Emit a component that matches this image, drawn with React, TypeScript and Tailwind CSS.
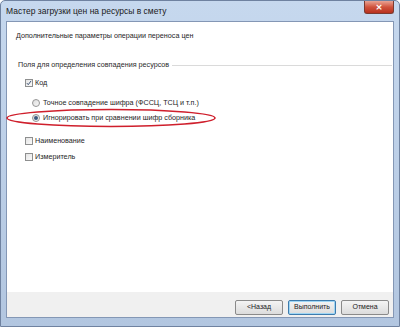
import React from "react";

const font = { fontFamily: '"Liberation Sans", Arial, sans-serif' };

function Checkbox({ checked }: { checked?: boolean }) {
  return (
    <div className="w-[8px] h-[8px] border border-[#8e8f8f] bg-gradient-to-br from-[#e4e4e4] to-[#fafafa] flex items-center justify-center shrink-0">
      {checked && (
        <svg width="8" height="8" viewBox="0 0 8 8" className="-mt-[1px]">
          <path d="M1.2 4.2 L3 6.2 L6.8 1.2" stroke="#3a4f70" strokeWidth="1.3" fill="none" />
        </svg>
      )}
    </div>
  );
}

function Radio({ checked }: { checked?: boolean }) {
  return (
    <div className="w-[8px] h-[8px] rounded-full border border-[#959595] bg-gradient-to-br from-[#dcdcdc] to-[#f8f8f8] flex items-center justify-center shrink-0">
      {checked && <div className="w-[4px] h-[4px] rounded-full bg-[#3b5a80]" />}
    </div>
  );
}

function Button({ label, primary }: { label: string; primary?: boolean }) {
  return (
    <div
      className={`w-[48px] h-[15px] rounded-[2px] flex items-center justify-center text-[7px] text-[#222] bg-gradient-to-b from-[#f4f4f4] to-[#dcdcdc] border ${
        primary ? "border-[#3d7bad] shadow-[inset_0_0_0_1px_#9fd6f4]" : "border-[#8a8a8a]"
      }`}
    >
      {label}
    </div>
  );
}

export default function App() {
  return (
    <div
      className="w-[400px] h-[327px] overflow-hidden flex flex-col bg-gradient-to-b from-[#c6d8ee] to-[#b2c6e0] border border-[#6f82a0] rounded-t-[5px]"
      style={font}
    >
      {/* Title bar */}
      <div className="h-[20px] shrink-0 flex items-start relative">
        <div className="pl-[5px] pt-[4px] text-[8.5px] leading-[12px] text-[#1a1a1a]">
          Мастер загрузки цен на ресурсы в смету
        </div>
        <div className="absolute right-[5px] top-[0px] w-[30px] h-[13px] rounded-b-[3px] border border-[#7b3a30] border-t-0 bg-gradient-to-b from-[#e8a394] via-[#d0533d] to-[#b8301d] flex items-center justify-center">
          <span className="text-white text-[9px] leading-none font-bold" style={{ fontFamily: '"DejaVu Sans", sans-serif' }}>
            ×
          </span>
        </div>
      </div>

      {/* Client area */}
      <div className="flex-1 mx-[5px] flex flex-col border border-[#8497b5] bg-white relative">
        <div className="flex-1 flex flex-col text-[7.2px] leading-[10px] text-[#1e1e1e]">
          <div className="mt-[9px] pl-[9px]">Дополнительные параметры операции переноса цен</div>

          <div className="mt-[19px] pl-[11px] pr-[1px] flex items-center gap-[3px]">
            <span className="text-[#2a2a2a]">Поля для определения совпадения ресурсов</span>
            <div className="flex-1 h-px bg-[#dadada]" />
          </div>

          <div className="mt-[8px] pl-[18px] flex items-center gap-[2px]">
            <Checkbox checked />
            <span>Код</span>
          </div>

          <div className="mt-[10px] pl-[25px] flex items-center gap-[3px]">
            <Radio />
            <span>Точное совпадение шифра (ФССЦ, ТСЦ и т.п.)</span>
          </div>

          <div className="mt-[5px] pl-[25px] flex items-center gap-[3px]">
            <Radio checked />
            <span>Игнорировать при сравнении шифр сборника</span>
          </div>

          <div className="mt-[13px] pl-[18px] flex items-center gap-[2px]">
            <Checkbox />
            <span>Наименование</span>
          </div>

          <div className="mt-[6px] pl-[18px] flex items-center gap-[2px]">
            <Checkbox />
            <span>Измеритель</span>
          </div>
        </div>

        {/* Footer */}
        <div className="h-[25px] shrink-0 bg-[#f0f0f0] flex justify-end items-start pt-[8px] pr-[4px] gap-[5px]">
          <Button label="<Назад" />
          <Button label="Выполнить" primary />
          <Button label="Отмена" />
        </div>

        {/* Red annotation ellipse */}
        <svg className="absolute left-[-2px] top-[86px] pointer-events-none" width="212" height="20" viewBox="0 0 212 20">
          <ellipse cx="106" cy="10" rx="104" ry="8.5" fill="none" stroke="#cf1f2c" strokeWidth="1.6" />
        </svg>
      </div>

      <div className="h-[8px] shrink-0" />
    </div>
  );
}
